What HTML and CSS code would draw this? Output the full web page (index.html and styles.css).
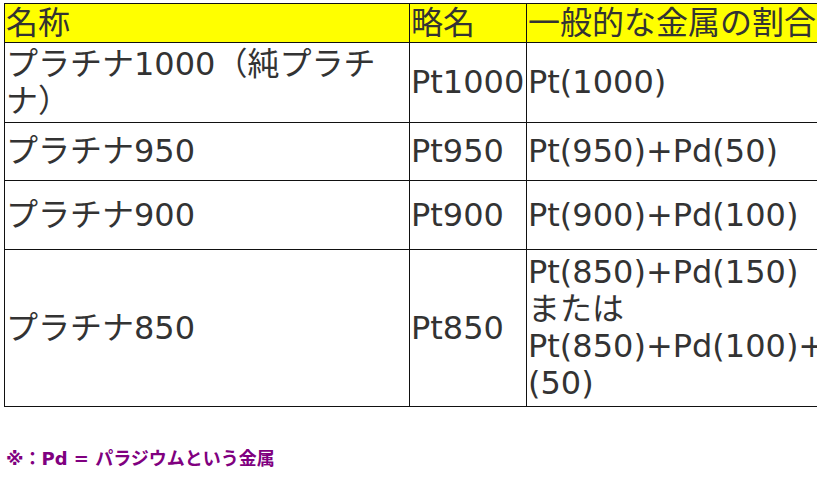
FILE: index.html
```html
<!DOCTYPE html>
<html lang="ja">
<head>
<meta charset="utf-8">
<title>プラチナの種類</title>
<link rel="stylesheet" href="styles.css">
</head>
<body>
<div class="frame">
  <table class="pt-table">
    <colgroup>
      <col class="c-name">
      <col class="c-abbr">
      <col class="c-ratio">
    </colgroup>
    <thead>
      <tr class="r-head">
        <th>名称</th>
        <th>略名</th>
        <th>一般的な金属の割合</th>
      </tr>
    </thead>
    <tbody>
      <tr class="r-1">
        <td>プラチナ1000（純プラチナ）</td>
        <td>Pt1000</td>
        <td>Pt(1000)</td>
      </tr>
      <tr class="r-2">
        <td>プラチナ950</td>
        <td>Pt950</td>
        <td>Pt(950)+Pd(50)</td>
      </tr>
      <tr class="r-3">
        <td>プラチナ900</td>
        <td>Pt900</td>
        <td>Pt(900)+Pd(100)</td>
      </tr>
      <tr class="r-4">
        <td>プラチナ850</td>
        <td>Pt850</td>
        <td>Pt(850)+Pd(150)<br>または<br>Pt(850)+Pd(100)+<br>(50)</td>
      </tr>
    </tbody>
  </table>
</div>
<p class="note">※：Pd = パラジウムという金属</p>
</body>
</html>
```

FILE: styles.css
```css
html, body {
  margin: 0;
  padding: 0;
  background: #ffffff;
}

body {
  font-family: "DejaVu Sans", "Noto Sans CJK JP", sans-serif;
  color: #333333;
}

.frame {
  width: 817px;
  overflow: hidden;
  padding: 3px 0 0 4px;
  box-sizing: border-box;
}

.pt-table {
  border-collapse: collapse;
  table-layout: fixed;
  width: 850px;
  font-size: 32px;
  line-height: 37px;
}

.c-name { width: 405px; }
.c-abbr { width: 117px; }
.c-ratio { width: 328px; }

.pt-table th,
.pt-table td {
  border: 1px solid #111111;
  padding: 0 1px;
  text-align: left;
  vertical-align: middle;
  font-weight: normal;
  white-space: normal;
}

.pt-table th {
  background: #ffff00;
}

.r-head th { height: 38px; }
.r-1 td { height: 79px; }
.r-2 td { height: 57px; }
.r-3 td { height: 68px; }
.r-4 td { height: 156px; }

.note {
  margin: 40px 0 0 6px;
  font-size: 18px;
  line-height: 24px;
  font-weight: bold;
  color: #800080;
}
```
